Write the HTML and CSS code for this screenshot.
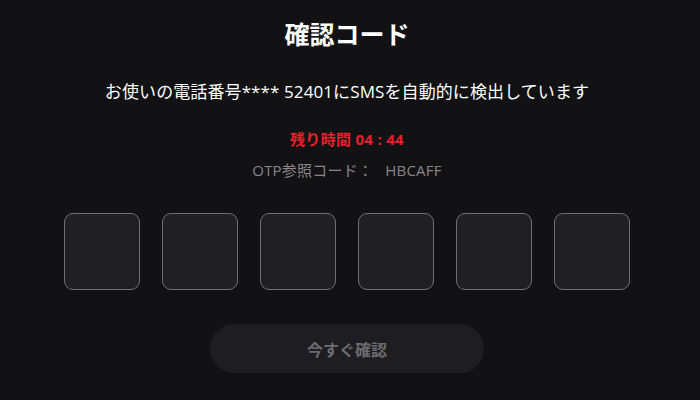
FILE: index.html
```html
<!DOCTYPE html>
<html lang="ja">
<head>
<meta charset="utf-8">
<link rel="stylesheet" href="styles.css">
</head>
<body>
<main class="page">
  <h1 class="title">確認コード</h1>
  <p class="desc">お使いの電話番号**** 52401にSMSを自動的に検出しています</p>
  <p class="timer">残り時間 04 : 44</p>
  <p class="ref">OTP参照コード：&nbsp;&nbsp; HBCAFF</p>
  <div class="otp">
    <div class="cell"></div>
    <div class="cell"></div>
    <div class="cell"></div>
    <div class="cell"></div>
    <div class="cell"></div>
    <div class="cell"></div>
  </div>
  <button class="confirm" type="button">今すぐ確認</button>
</main>
</body>
</html>
```

FILE: styles.css
```css
html, body {
  margin: 0;
  padding: 0;
  background: #121215;
  height: 100%;
}
.page {
  width: 694px;
  display: flex;
  flex-direction: column;
  align-items: center;
  font-family: "Open Sans", "Noto Sans CJK JP", sans-serif;
  color: #ffffff;
}
.title {
  margin: 16px 0 0;
  font-size: 25px;
  line-height: 36px;
  font-weight: 700;
}
.desc {
  margin: 28px 0 0;
  font-size: 17px;
  line-height: 24px;
  letter-spacing: 0.1px;
}
.timer {
  margin: 25px 0 0;
  font-size: 15px;
  line-height: 20px;
  font-weight: 700;
  color: #e8212b;
  letter-spacing: 0.3px;
}
.ref {
  margin: 11px 0 0;
  font-size: 15px;
  line-height: 20px;
  color: #8b8589;
  letter-spacing: 0.2px;
}
.otp {
  margin-top: 33px;
  display: flex;
  gap: 22px;
}
.cell {
  width: 74px;
  height: 75px;
  border: 1px solid #707074;
  border-radius: 9px;
  background: #202024;
}
.confirm {
  margin-top: 34px;
  width: 274px;
  height: 49px;
  border: none;
  border-radius: 25px;
  background: #1e1d21;
  color: #6c6b70;
  font-family: "Open Sans", "Noto Sans CJK JP", sans-serif;
  font-size: 16px;
  font-weight: 700;
}
```
